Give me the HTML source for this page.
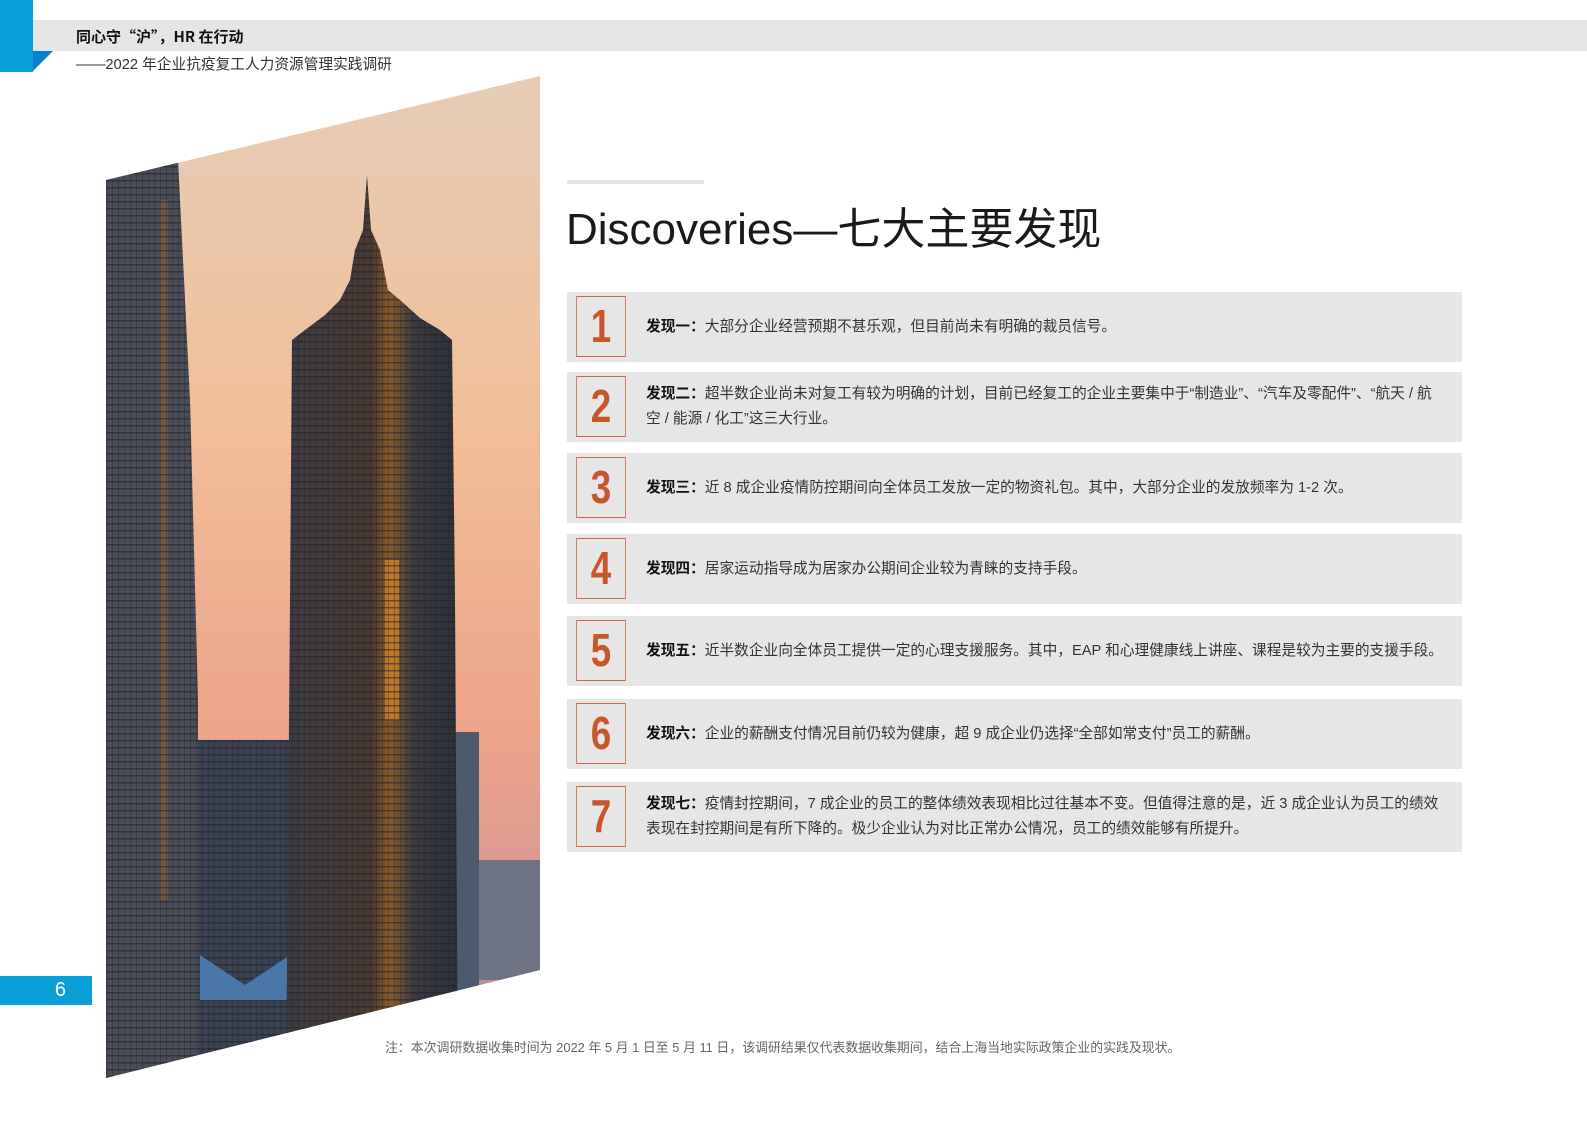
<!DOCTYPE html>
<html><head><meta charset="utf-8"><style>
*{margin:0;padding:0;box-sizing:border-box}
body{width:1587px;height:1122px;background:#fff;position:relative;overflow:hidden;font-family:"Liberation Sans","Noto Sans CJK SC",sans-serif;color:#222}
.abs{position:absolute}
.row{position:absolute;left:567px;width:895px;height:70px;background:#e6e6e6}
.num{position:absolute;left:3px;top:4px;width:62px;height:61px;border:1.5px solid #d0683f;color:#c9552a;font-family:"Liberation Sans Narrow","Liberation Sans",sans-serif;font-weight:bold;font-size:46px;text-align:center;line-height:58px;transform:scaleX(0.8)}
.txt{position:absolute;left:79px;right:22px;top:0;bottom:0;display:flex;align-items:center;font-size:14.7px;line-height:25px;color:#333}
.txt b{color:#111}
</style></head><body>
<div class="abs" style="left:33px;top:20px;width:1554px;height:31px;background:#e5e5e5"></div>
<div class="abs" style="left:0;top:0;width:33px;height:72px;background:#0a9fd9"></div>
<svg class="abs" style="left:33px;top:51px" width="22" height="21"><polygon points="0,0 20,0 0,20" fill="#0a7fd0"/></svg>
<div class="abs" style="left:76px;top:27px;font-size:15px;font-weight:bold;color:#111;font-family:'Noto Sans CJK SC',sans-serif;line-height:20px">同心守“沪”，HR 在行动</div>
<div class="abs" style="left:76px;top:53px;font-size:14.7px;color:#333">——2022 年企业抗疫复工人力资源管理实践调研</div>

<svg class="abs" style="left:0;top:0" width="560" height="1100">
<defs>
<clipPath id="c"><polygon points="106,180 540,76 540,970 106,1078"/></clipPath>
<linearGradient id="sky" x1="0" y1="0" x2="0" y2="1">
<stop offset="0" stop-color="#e6cdb8"/><stop offset="0.35" stop-color="#f1bf98"/><stop offset="0.65" stop-color="#eda48a"/><stop offset="0.8" stop-color="#d99a92"/><stop offset="1" stop-color="#8a8c9a"/></linearGradient>
<linearGradient id="jm" x1="0" y1="0" x2="1" y2="0"><stop offset="0" stop-color="#3c3b42"/><stop offset="0.5" stop-color="#4a3a32"/><stop offset="0.6" stop-color="#8a5a2a"/><stop offset="0.75" stop-color="#3a3a40"/><stop offset="1" stop-color="#2e3038"/></linearGradient>
<pattern id="win" width="6" height="7" patternUnits="userSpaceOnUse"><rect width="6" height="7" fill="none"/><rect y="5" width="6" height="1.5" fill="#1e2028" opacity="0.55"/><rect x="4" width="1" height="7" fill="#1e2028" opacity="0.3"/></pattern>
</defs>
<g clip-path="url(#c)">
<rect x="100" y="70" width="450" height="1020" fill="url(#sky)"/>
<rect x="478" y="860" width="70" height="120" fill="#6f7484"/>
<polygon points="106,160 178,160 190,400 198,700 198,1090 106,1090" fill="#4a4c56"/>
<rect x="160" y="200" width="8" height="700" fill="#8a6040" opacity="0.6"/>
<polygon points="106,160 178,160 190,400 198,700 198,1090 106,1090" fill="url(#win)"/>
<rect x="198" y="740" width="95" height="350" fill="#3a4150"/>
<rect x="198" y="740" width="95" height="350" fill="url(#win)"/>
<polygon points="200,955 245,985 290,955 290,1000 200,1000" fill="#4b77a8"/>
<rect x="455" y="732" width="24" height="300" fill="#4d5a6e"/>
<polygon points="367,175 371,230 380,250 388,290 400,300 420,318 440,330 452,340 455,600 458,1090 286,1090 290,600 292,340 305,330 325,315 340,300 350,280 355,250 363,230" fill="url(#jm)"/>
<rect x="385" y="560" width="14" height="160" fill="#d9862c" opacity="0.7"/>
<polygon points="367,175 371,230 380,250 388,290 400,300 420,318 440,330 452,340 455,600 458,1090 286,1090 290,600 292,340 305,330 325,315 340,300 350,280 355,250 363,230" fill="url(#win)"/>
</g>
</svg>

<div class="abs" style="left:567px;top:180px;width:137px;height:4px;background:#dfe7ea"></div>
<div class="abs" style="left:566px;top:193px;font-size:44px;color:#1a1a1a;white-space:nowrap">Discoveries—七大主要发现</div>

<div class="row" style="top:292px"><div class="num">1</div><div class="txt"><span><b>发现一：</b>大部分企业经营预期不甚乐观，但目前尚未有明确的裁员信号。</span></div></div>
<div class="row" style="top:372px"><div class="num">2</div><div class="txt"><span><b>发现二：</b>超半数企业尚未对复工有较为明确的计划，目前已经复工的企业主要集中于“制造业”、“汽车及零配件”、“航天 / 航空 / 能源 / 化工”这三大行业。</span></div></div>
<div class="row" style="top:453px"><div class="num">3</div><div class="txt"><span><b>发现三：</b>近 8 成企业疫情防控期间向全体员工发放一定的物资礼包。其中，大部分企业的发放频率为 1-2 次。</span></div></div>
<div class="row" style="top:534px"><div class="num">4</div><div class="txt"><span><b>发现四：</b>居家运动指导成为居家办公期间企业较为青睐的支持手段。</span></div></div>
<div class="row" style="top:616px"><div class="num">5</div><div class="txt" style="right:4px"><span style="white-space:nowrap"><b>发现五：</b>近半数企业向全体员工提供一定的心理支援服务。其中，EAP 和心理健康线上讲座、课程是较为主要的支援手段。</span></div></div>
<div class="row" style="top:699px"><div class="num">6</div><div class="txt"><span><b>发现六：</b>企业的薪酬支付情况目前仍较为健康，超 9 成企业仍选择“全部如常支付”员工的薪酬。</span></div></div>
<div class="row" style="top:782px"><div class="num">7</div><div class="txt"><span><b>发现七：</b>疫情封控期间，7 成企业的员工的整体绩效表现相比过往基本不变。但值得注意的是，近 3 成企业认为员工的绩效表现在封控期间是有所下降的。极少企业认为对比正常办公情况，员工的绩效能够有所提升。</span></div></div>

<div class="abs" style="left:0;top:976px;width:92px;height:29px;background:#0a9fd9;color:#fff;font-size:20px;line-height:29px;text-align:right;padding-right:26px">6</div>
<div class="abs" style="left:385px;top:1037px;font-size:12.9px;color:#666;white-space:nowrap">注：本次调研数据收集时间为 2022 年 5 月 1 日至 5 月 11 日，该调研结果仅代表数据收集期间，结合上海当地实际政策企业的实践及现状。</div>
</body></html>
